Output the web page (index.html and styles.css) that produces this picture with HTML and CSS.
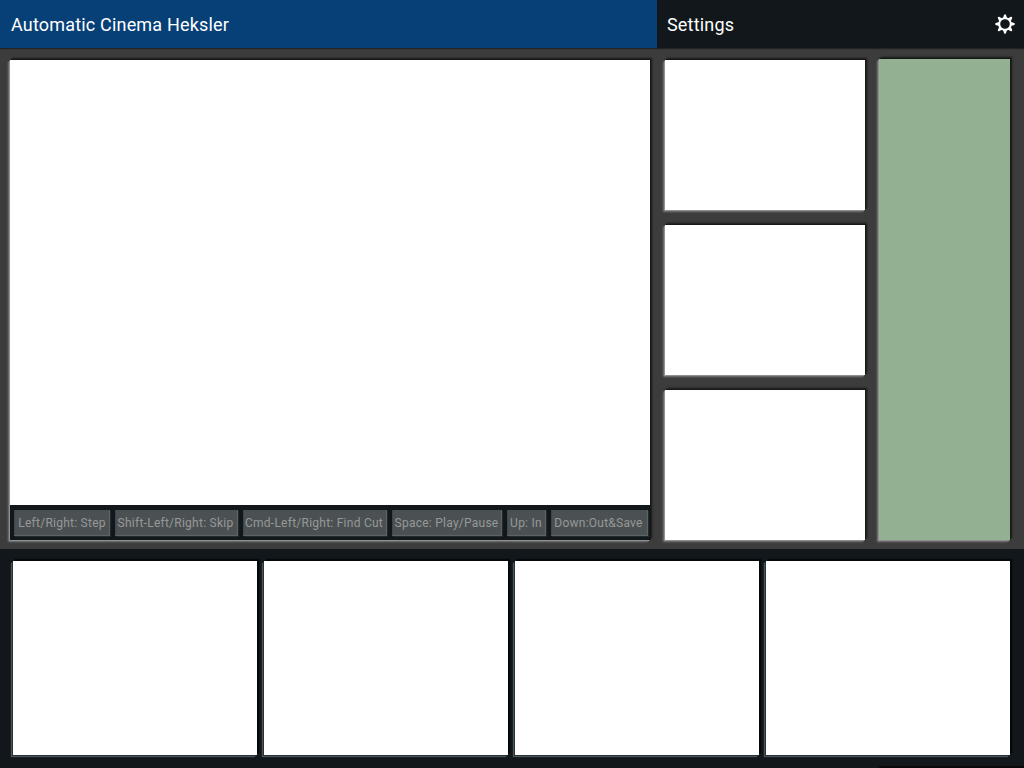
FILE: index.html
```
<!DOCTYPE html>
<html lang="en">
<head>
<meta charset="utf-8">
<title>Automatic Cinema Heksler</title>
<link rel="stylesheet" href="styles.css">
</head>
<body>
<header class="header">
  <h1 class="title">Automatic Cinema Heksler</h1>
  <div class="settings">
    <span>Settings</span>
    <svg class="gear" width="20" height="20" viewBox="-10 -10 20 20">
      <g fill="#fff">
        <path id="tooth" d="M-2.1-5.8L-.9-9.3Q0-10.4 .9-9.3L2.1-5.8Z"/>
        <use href="#tooth" transform="rotate(45)"/>
        <use href="#tooth" transform="rotate(90)"/>
        <use href="#tooth" transform="rotate(135)"/>
        <use href="#tooth" transform="rotate(180)"/>
        <use href="#tooth" transform="rotate(225)"/>
        <use href="#tooth" transform="rotate(270)"/>
        <use href="#tooth" transform="rotate(315)"/>
      </g>
      <circle r="5.8" fill="none" stroke="#fff" stroke-width="2"/>
    </svg>
  </div>
</header>
<main class="workspace">
  <section class="player panel">
    <div class="screen"></div>
    <div class="keys">
      <span class="key k-step">Left/Right: Step</span>
      <span class="key k-skip">Shift-Left/Right: Skip</span>
      <span class="key k-cut">Cmd-Left/Right: Find Cut</span>
      <span class="key k-play">Space: Play/Pause</span>
      <span class="key k-in">Up: In</span>
      <span class="key k-out">Down:Out&amp;Save</span>
    </div>
  </section>
  <section class="previews">
    <div class="preview panel"></div>
    <div class="preview panel"></div>
    <div class="preview panel"></div>
  </section>
  <aside class="bin panel"></aside>
</main>
<footer class="clips">
  <div class="clip"></div>
  <div class="clip"></div>
  <div class="clip"></div>
  <div class="clip"></div>
  <div class="tray"></div>
</footer>
</body>
</html>
```
FILE: styles.css
```
* { box-sizing: border-box; }
body {
  margin: 0;
  width: 1024px;
  height: 768px;
  overflow: hidden;
  display: flex;
  flex-direction: column;
  background: #3c3c3c;
  font-family: Roboto, "Liberation Sans", sans-serif;
}
.header {
  display: flex;
  height: 48px;
  flex: none;
  color: #fff;
  font-size: 18px;
  line-height: 50px;
  letter-spacing: .18px;
  box-shadow: 0 1px 1px #242424;
}
.title {
  margin: 0;
  width: 657px;
  padding-left: 11px;
  background: #074077;
  font-size: 18px;
  font-weight: 400;
}
.settings {
  flex: 1;
  display: flex;
  justify-content: space-between;
  padding: 0 9px 0 10px;
  background: #11171a;
}
.gear { margin-top: 14px; }
.workspace {
  display: flex;
  height: 501px;
  flex: none;
  padding: 12px 14px 9px 10px;
}
.panel {
  box-shadow: -1px 1px 1px #909090, 1px -1px 1px #171717, -2px 2px 2px #707070, 2px -2px 2px #1c1c1c;
}
.player {
  width: 640px;
  margin-right: 15px;
  display: flex;
  flex-direction: column;
  background: #11171a;
}
.screen { height: 445px; background: #fff; }
.keys {
  display: flex;
  gap: 5px;
  padding: 5px 2px 0 4px;
}
.key {
  height: 26px;
  line-height: 26px;
  padding-right: 2px;
  text-align: center;
  white-space: nowrap;
  font-size: 12px;
  letter-spacing: .25px;
  color: #969898;
  background: #4b5153;
  box-shadow: inset -1px -1px 1px #5f6567, inset 1px 0 1px #3f4648, 1px 1px 1px #22292c;
}
.k-step { width: 96px; padding-right: 0; }
.k-skip { width: 123px; }
.k-cut { width: 144px; }
.k-play { width: 110px; padding-right: 1px; }
.k-in { width: 39px; padding-right: 1px; }
.k-out { width: 97px; padding-right: 2px; }
.previews {
  width: 200px;
  margin-right: 14px;
  display: flex;
  flex-direction: column;
  gap: 15px;
}
.preview { height: 150px; background: #fff; }
.bin { width: 131px; margin-top: -1px; background: #94b092; }
.clips {
  position: relative;
  flex: 1;
  display: flex;
  gap: 7px;
  padding: 12px 14px 13px 13px;
  background: #11171a;
}
.clip {
  width: 244px;
  background: #fff;
  box-shadow: -1px 1px 0 #263236, -2px 2px 1px #4c565a, 2px -2px 1px #03080b;
}
.tray {
  position: absolute;
  left: 879px;
  right: 0;
  bottom: 0;
  height: 2px;
  background: #07090a;
}
```
